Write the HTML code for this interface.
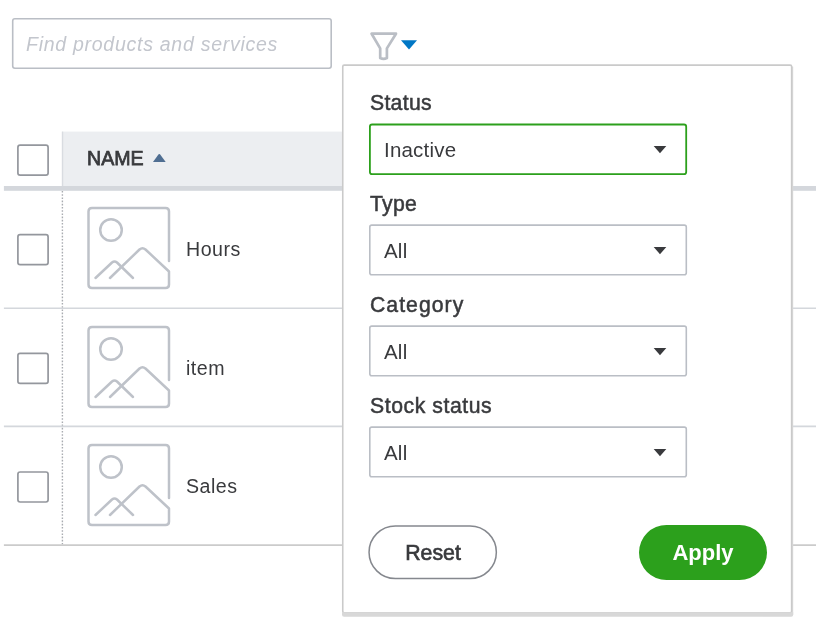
<!DOCTYPE html>
<html lang="en">
<head>
<meta charset="utf-8">
<title>Products and services</title>
<style>
*{box-sizing:border-box;margin:0;padding:0}
html,body{width:816px;height:623px;overflow:hidden;background:#fff}
body{position:relative;font-family:"Liberation Sans",sans-serif;color:#393a3d}
.abs{position:absolute}
.item,.lbl,.sel,.btn,.thname,.search{will-change:transform}
.search{left:12px;top:18px;width:320px;height:51px;
  font-style:italic;font-size:19.5px;letter-spacing:.73px;color:#c3c6cd;line-height:53px;padding-left:14px;white-space:nowrap}
.funnel{left:368px;top:30px;width:32px;height:32px}
.caret{left:401px;top:40px;width:16px;height:10px}
.thname{left:87px;top:147px;font-weight:normal;-webkit-text-stroke:.75px #393a3d;font-size:19.6px;line-height:22px;color:#393a3d;white-space:nowrap}
.sort{left:152px;top:153px;width:14px;height:9px}
.pic{left:86px;width:86px;height:86px}
.item{left:186px;letter-spacing:.5px;font-size:19.6px;line-height:24px;color:#393a3d;white-space:nowrap}
.pop{left:343px;top:66px;width:448px;height:546px;background:#fff}
.lbl{left:27px;font-weight:normal;-webkit-text-stroke:.5px #393a3d;letter-spacing:.3px;font-size:21.2px;line-height:24px;color:#393a3d;white-space:nowrap}
.sel{left:26px;width:318px;height:51px;font-size:20.5px;letter-spacing:.2px;line-height:51px;padding-left:15px;color:#393a3d;white-space:nowrap}
.btn{top:459px;height:55px;border-radius:28px;font-weight:bold;font-size:21px;line-height:53px;text-align:center}
.reset{left:25px;width:130px;color:#393a3d;font-weight:normal;-webkit-text-stroke:.65px #393a3d;font-size:21.3px;line-height:57.5px}
.apply{left:296px;width:128px;background:#2ca01c;color:#fff;line-height:55px;font-size:22px}
</style>
</head>
<body>

<div class="abs search">Find products and services</div>

<svg class="abs funnel" viewBox="0 0 32 32" fill="none" stroke="#babec5" stroke-width="2.700" stroke-linejoin="round" stroke-linecap="round">
  <path d="M3.600 3.700 H28 L18.900 18.400 V28 Q15.550 29.800 12.200 28 V18.400 Z"/>
</svg>
<svg class="abs caret" viewBox="0 0 16 10"><path d="M0 0.3 H16 L8 9.6 Z" fill="#0077c5"/></svg>

<svg class="abs" style="left:0;top:0" width="816" height="623" viewBox="0 0 816 623" fill="none">
  <rect x="12.700" y="18.700" width="318.500" height="49.500" rx="2.200" stroke="#babec5" stroke-width="1.600"/>
  <rect x="62" y="131.600" width="300" height="55" fill="#eceef1"/>
  <rect x="61.800" y="131.600" width="1.400" height="55" fill="#d9dce1"/>
  <rect x="3.900" y="186" width="812.100" height="4.800" fill="#d4d7dc"/>
  <line x1="62.400" y1="191" x2="62.400" y2="544.300" stroke="#a9acb1" stroke-width="1.400" stroke-dasharray="1.600 1.600"/>
  <g stroke="#d4d7dc" stroke-width="1.600">
    <line x1="3.900" y1="308.200" x2="816" y2="308.200"/>
    <line x1="3.900" y1="426.400" x2="816" y2="426.400"/>
  </g>
  <line x1="3.900" y1="545.100" x2="816" y2="545.100" stroke="#cbcbcb" stroke-width="1.600"/>
  <g stroke="#94979d" stroke-width="1.700">
    <rect x="17.900" y="145.200" width="30.200" height="30" rx="2.200"/>
    <rect x="17.900" y="234.700" width="30.200" height="30" rx="2.200"/>
    <rect x="17.900" y="353.400" width="30.200" height="30" rx="2.200"/>
    <rect x="17.900" y="472" width="30.200" height="30" rx="2.200"/>
  </g>
</svg>
<div class="abs thname">NAME</div>
<svg class="abs sort" viewBox="0 0 14 9"><path d="M1 9 L6.600 1.300 Q7.300 0.500 8 1.300 L13.700 9 Z" fill="#4f6e92"/></svg>



<svg class="abs pic" style="top:205px" viewBox="0 0 86 86" fill="none" stroke="#bec2c9" stroke-width="2.500" stroke-linecap="round" stroke-linejoin="round">
  <path d="M83 56 V6.5 Q83 3 79.5 3 H6 Q2.5 3 2.500 6.500 V79.500 Q2.5 83 6 83 H79.5 Q83 83 83 79.500 V66.500 L59.500 44.500 Q56.500 42 53.500 44.500 L24 73"/>
  <path d="M9.5 73 L26 57.500 Q28.500 55.500 31 57.500 L47 73"/>
  <circle cx="25" cy="25" r="10.800"/>
</svg>
<div class="abs item" style="top:237px">Hours</div>

<svg class="abs pic" style="top:323.500px" viewBox="0 0 86 86" fill="none" stroke="#bec2c9" stroke-width="2.500" stroke-linecap="round" stroke-linejoin="round">
  <path d="M83 56 V6.5 Q83 3 79.5 3 H6 Q2.5 3 2.500 6.500 V79.500 Q2.5 83 6 83 H79.5 Q83 83 83 79.500 V66.500 L59.500 44.500 Q56.500 42 53.500 44.500 L24 73"/>
  <path d="M9.5 73 L26 57.500 Q28.500 55.500 31 57.500 L47 73"/>
  <circle cx="25" cy="25" r="10.800"/>
</svg>
<div class="abs item" style="top:355.5px">item</div>

<svg class="abs pic" style="top:442.200px" viewBox="0 0 86 86" fill="none" stroke="#bec2c9" stroke-width="2.500" stroke-linecap="round" stroke-linejoin="round">
  <path d="M83 56 V6.5 Q83 3 79.5 3 H6 Q2.5 3 2.500 6.500 V79.500 Q2.5 83 6 83 H79.5 Q83 83 83 79.500 V66.500 L59.500 44.500 Q56.500 42 53.500 44.500 L24 73"/>
  <path d="M9.5 73 L26 57.500 Q28.500 55.500 31 57.500 L47 73"/>
  <circle cx="25" cy="25" r="10.800"/>
</svg>
<div class="abs item" style="top:474px">Sales</div>

<div class="abs pop">
  <svg class="abs" style="left:0;top:0;overflow:visible" width="448" height="546" viewBox="343 66 448 546" fill="none">
    <rect x="791.400" y="66.600" width="1.800" height="548" fill="#dcdcdc"/>
    <rect x="342.750" y="65.100" width="448.900" height="547.700" rx="1.500" stroke="#cacaca" stroke-width="1.600"/>
    <path d="M342 612.300 H793.200 V614.800 Q793.200 616.800 791.200 616.800 H344 Q342 616.800 342 614.800 Z" fill="#d8d8d8"/>
    <rect x="369.900" y="124.500" width="316.300" height="49.600" rx="2.200" stroke="#2ca01c" stroke-width="1.800"/>
    <g stroke="#babec5" stroke-width="1.600">
      <rect x="369.800" y="225.100" width="316.500" height="49.700" rx="2"/>
      <rect x="369.800" y="326.100" width="316.500" height="49.700" rx="2"/>
      <rect x="369.800" y="427.100" width="316.500" height="49.700" rx="2"/>
    </g>
    <rect x="369.050" y="525.900" width="127.300" height="52.700" rx="26.350" stroke="#85888e" stroke-width="1.500"/>
    <g fill="#393a3d">
      <path d="M653.700 145.900 H666.300 L660 153.300 Z"/>
      <path d="M653.700 246.900 H666.300 L660 254.300 Z"/>
      <path d="M653.700 347.900 H666.300 L660 355.300 Z"/>
      <path d="M653.700 448.900 H666.300 L660 456.300 Z"/>
    </g>
  </svg>
  <div class="abs lbl" style="top:25px">Status</div>
  <div class="abs sel" style="top:58px">Inactive</div>
  <div class="abs lbl" style="top:126px">Type</div>
  <div class="abs sel" style="top:159px">All</div>
  <div class="abs lbl" style="top:227px;letter-spacing:1.05px">Category</div>
  <div class="abs sel" style="top:260px">All</div>
  <div class="abs lbl" style="top:328px;letter-spacing:.57px">Stock status</div>
  <div class="abs sel" style="top:361px">All</div>
  <div class="abs btn reset">Reset</div>
  <div class="abs btn apply">Apply</div>
</div>

</body>
</html>
